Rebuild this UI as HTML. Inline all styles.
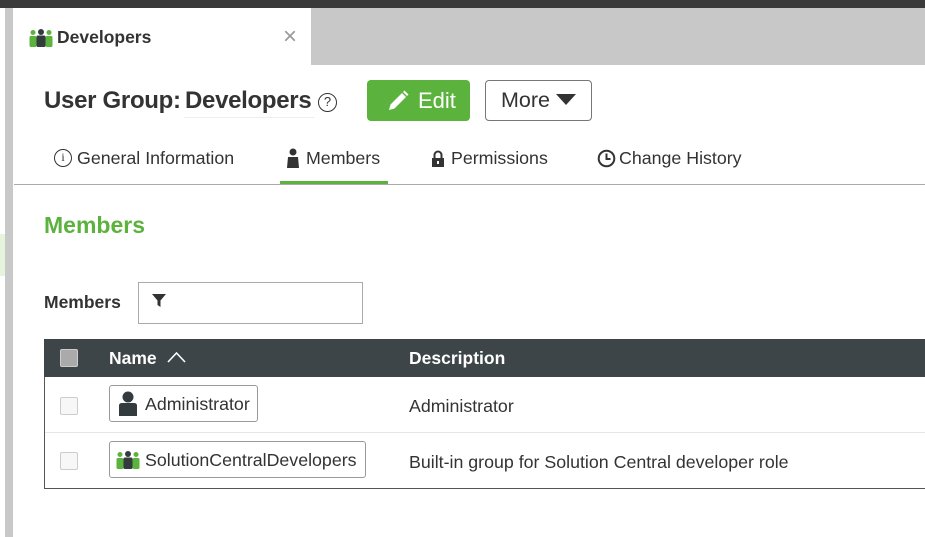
<!DOCTYPE html>
<html><head><meta charset="utf-8"><style>
*{margin:0;padding:0;box-sizing:border-box}
body{width:925px;height:537px;overflow:hidden;background:#fff;font-family:"Liberation Sans",Arial,sans-serif;color:#333;position:relative}
.a{position:absolute;white-space:nowrap}
</style></head><body>
<div class="a" style="left:0;top:0;width:925px;height:8px;background:#3a3a3a"></div>
<div class="a" style="left:5px;top:8px;width:8px;height:529px;background:#c8c8c8"></div>
<div class="a" style="left:0;top:234px;width:5px;height:42px;background:#e6f4dd"></div>
<div class="a" style="left:311px;top:8px;width:614px;height:57px;background:#c8c8c8"></div>
<svg class="a" style="left:29px;top:29px" width="24" height="18" viewBox="0 0 24 18">
<circle cx="4" cy="3.5" r="2.5" fill="#5bb33e"/><rect x="0.5" y="7" width="7" height="11" rx="1.5" fill="#5bb33e"/>
<circle cx="20" cy="3.5" r="2.5" fill="#5bb33e"/><rect x="16.5" y="7" width="7" height="11" rx="1.5" fill="#5bb33e"/>
<circle cx="12" cy="3" r="3" fill="#333b3e"/><rect x="7.5" y="6.5" width="9" height="11.5" rx="1.5" fill="#333b3e"/>
</svg>
<div class="a" style="left:57px;top:27px;font-size:17.5px;font-weight:bold;color:#333">Developers</div>
<div class="a" style="left:283px;top:23px;font-size:24px;color:#999">×</div>
<div class="a" style="left:44px;top:87px;font-size:24px;font-weight:bold;color:#333;letter-spacing:-0.3px">User Group:</div>
<div class="a" style="left:185px;top:87px;font-size:24px;font-weight:bold;color:#333;letter-spacing:-0.3px">Developers</div>
<div class="a" style="left:184px;top:117px;width:131px;height:1px;background:#eee"></div>
<div class="a" style="left:318px;top:93px;width:19px;height:19px;border:1.5px solid #333;border-radius:50%;font-size:13px;text-align:center;line-height:16px">?</div>
<div class="a" style="left:367px;top:80px;width:103px;height:41px;background:#5bb33e;border-radius:4px;color:#fff;font-size:22px;line-height:41px;padding-left:51px">Edit</div>
<svg class="a" style="left:386px;top:89px" width="24" height="24" viewBox="0 0 24 24"><path d="M3 21 L4.5 15.5 L16 4 L20 8 L8.5 19.5 Z" fill="#fff"/><path d="M17 3 L18.5 1.5 L22.5 5.5 L21 7 Z" fill="#fff"/></svg>
<div class="a" style="left:485px;top:80px;width:107px;height:41px;border:1px solid #777;border-radius:4px;font-size:21.5px;line-height:39px;padding-left:15px;color:#333">More</div>
<svg class="a" style="left:556px;top:94px" width="20" height="12"><path d="M0 0 H20 L10 11 Z" fill="#333"/></svg>
<div class="a" style="left:14px;top:184px;width:911px;height:1px;background:#aaa"></div>
<div class="a" style="left:280px;top:181px;width:108px;height:3px;background:#5bb33e"></div>
<div class="a" style="left:54px;top:149px;width:18px;height:18px;border:1.5px solid #333;border-radius:50%;font-size:12px;text-align:center;line-height:15px;font-family:'Liberation Serif',serif">i</div>
<div class="a" style="left:77px;top:148px;font-size:17.8px;color:#333">General Information</div>
<svg class="a" style="left:286px;top:148px" width="14" height="20" viewBox="0 0 14 20"><circle cx="7" cy="4" r="3.5" fill="#333"/><path d="M2 9 H12 L13 20 H1 Z" fill="#333"/></svg>
<div class="a" style="left:306px;top:148px;font-size:17.8px;color:#333">Members</div>
<svg class="a" style="left:431px;top:150px" width="14" height="17" viewBox="0 0 14 17"><path d="M3.5 8 V5 a3.5 3.5 0 0 1 7 0 V8" stroke="#333" stroke-width="2" fill="none"/><rect x="1" y="8" width="12" height="9" fill="#333"/><rect x="6" y="11" width="2" height="3" fill="#fff"/></svg>
<div class="a" style="left:451px;top:148px;font-size:17.8px;color:#333">Permissions</div>
<svg class="a" style="left:597px;top:149px" width="19" height="19" viewBox="0 0 19 19"><circle cx="9.5" cy="9.5" r="7.8" stroke="#333" stroke-width="2" fill="none"/><path d="M9.5 4.5 V10 H13.5" stroke="#333" stroke-width="2" fill="none"/></svg>
<div class="a" style="left:619px;top:148px;font-size:17.8px;color:#333">Change History</div>
<div class="a" style="left:44px;top:212px;font-size:23px;font-weight:bold;color:#5bb33e">Members</div>
<div class="a" style="left:44px;top:292px;font-size:17.5px;font-weight:bold;color:#333">Members</div>
<div class="a" style="left:138px;top:282px;width:225px;height:42px;border:1px solid #aaa"></div>
<svg class="a" style="left:152px;top:294px" width="14" height="14" viewBox="0 0 14 14"><path d="M0 0 H14 L8.5 6.5 V13 L5.5 11 V6.5 Z" fill="#333"/></svg>
<div class="a" style="left:44px;top:339px;width:881px;height:150px;border:1px solid #555;border-right:none"></div>
<div class="a" style="left:44px;top:339px;width:881px;height:38px;background:#3d4548"></div>
<div class="a" style="left:60px;top:349px;width:18px;height:18px;background:#aaa;border:1px solid #ccc;border-radius:2px"></div>
<div class="a" style="left:109px;top:348px;font-size:17.5px;font-weight:bold;color:#fff">Name</div>
<svg class="a" style="left:167px;top:351px" width="19" height="12"><path d="M1 11 L9.5 2 L18 11" stroke="#fff" stroke-width="1.6" fill="none"/></svg>
<div class="a" style="left:409px;top:348px;font-size:17.5px;font-weight:bold;color:#fff">Description</div>
<div class="a" style="left:45px;top:432px;width:880px;height:1px;background:#e6e6e6"></div>
<div class="a" style="left:60px;top:397px;width:18px;height:18px;border:1px solid #ccc;border-radius:2px;background:#f7f7f7"></div>
<div class="a" style="left:60px;top:452px;width:18px;height:18px;border:1px solid #ccc;border-radius:2px;background:#f7f7f7"></div>
<div class="a" style="left:109px;top:385px;width:149px;height:37px;border:1px solid #999;border-radius:3px"></div>
<svg class="a" style="left:118px;top:391px" width="20" height="25" viewBox="0 0 20 25"><circle cx="10" cy="6" r="5.5" fill="#333b3e"/><path d="M1 14 a3 3 0 0 1 3 -2 H16 a3 3 0 0 1 3 2 V25 H1 Z" fill="#333b3e"/></svg>
<div class="a" style="left:145px;top:394px;font-size:17.8px;color:#333">Administrator</div>
<div class="a" style="left:109px;top:441px;width:257px;height:37px;border:1px solid #999;border-radius:3px"></div>
<svg class="a" style="left:116px;top:451px" width="24" height="18" viewBox="0 0 24 18">
<circle cx="4" cy="3.5" r="2.5" fill="#5bb33e"/><rect x="0.5" y="7" width="7" height="11" rx="1.5" fill="#5bb33e"/>
<circle cx="20" cy="3.5" r="2.5" fill="#5bb33e"/><rect x="16.5" y="7" width="7" height="11" rx="1.5" fill="#5bb33e"/>
<circle cx="12" cy="3" r="3" fill="#333b3e"/><rect x="7.5" y="6.5" width="9" height="11.5" rx="1.5" fill="#333b3e"/>
</svg>
<div class="a" style="left:145px;top:450px;font-size:17.8px;color:#333">SolutionCentralDevelopers</div>
<div class="a" style="left:409px;top:396px;font-size:17.8px;color:#333">Administrator</div>
<div class="a" style="left:409px;top:452px;font-size:17.8px;color:#333">Built-in group for Solution Central developer role</div>
</body></html>
